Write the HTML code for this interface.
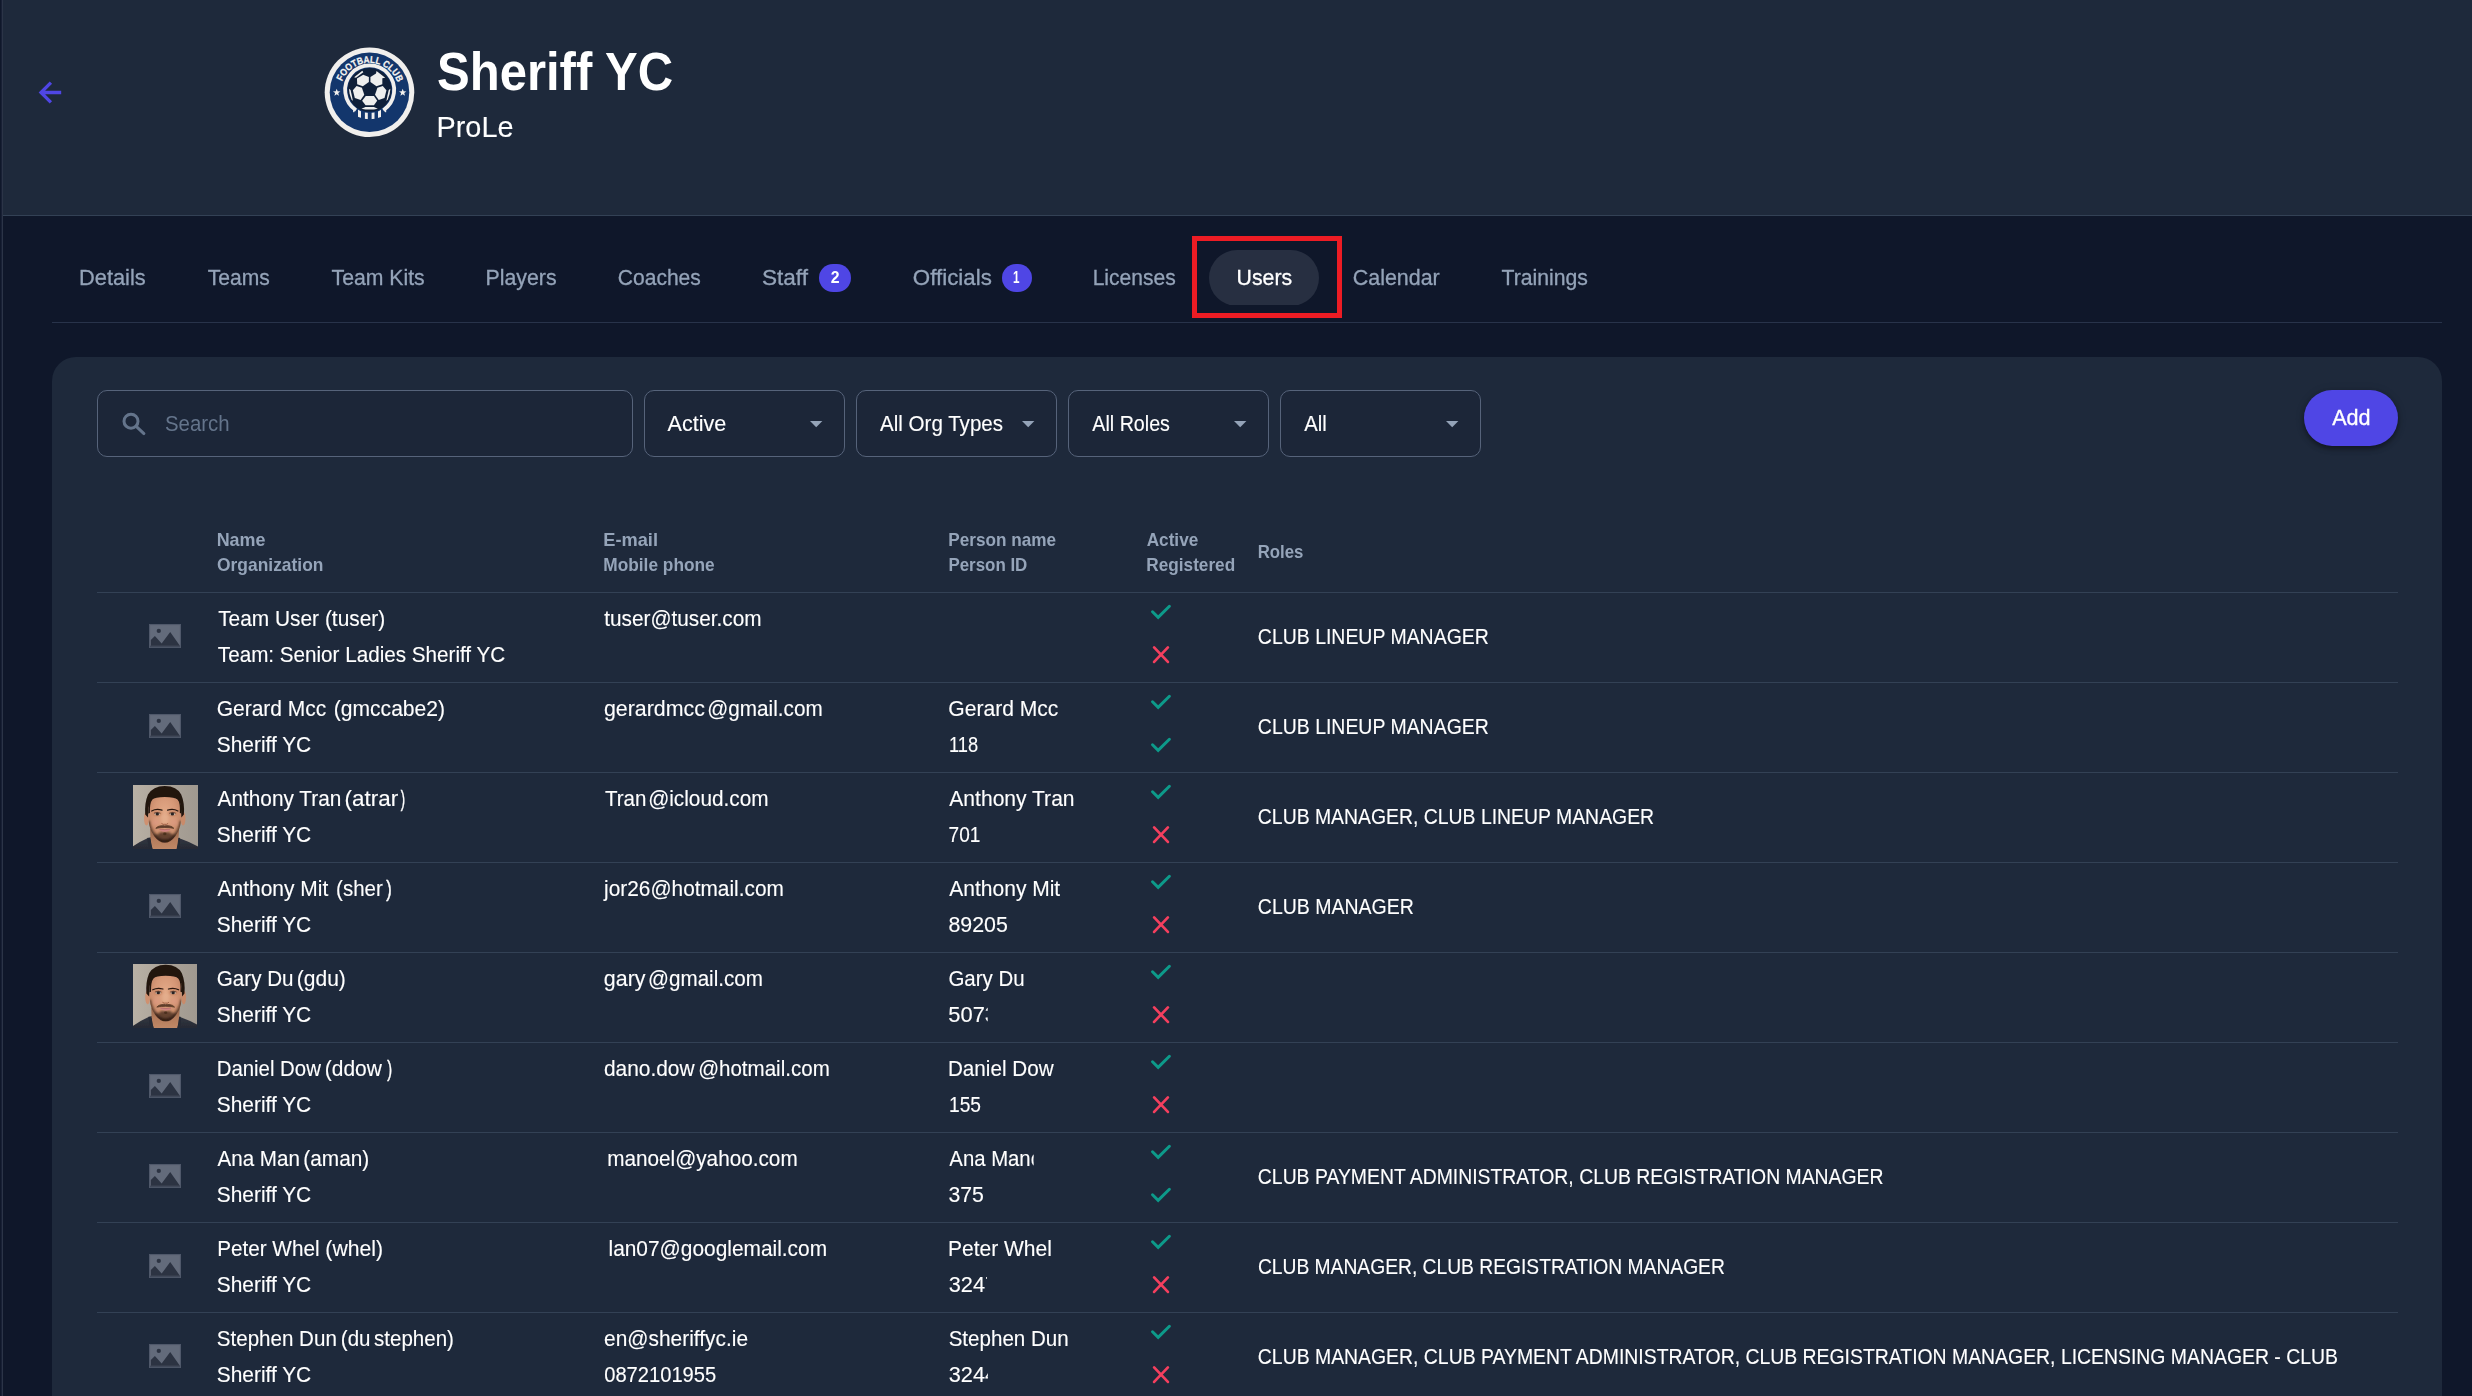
<!DOCTYPE html>
<html lang="en"><head><meta charset="utf-8"><title>Sheriff YC - Users</title>
<style>
html,body{margin:0;padding:0;width:2472px;height:1396px;overflow:hidden}
body{width:2472px;height:1396px;overflow:hidden;background:#0f172a;position:relative;font-family:"Liberation Sans", sans-serif}
.abs{position:absolute}
.t{position:absolute;white-space:pre;line-height:1;margin:0;padding:0;transform-origin:0 0}
.hl{position:absolute;height:1px;background:#334155}
.box{position:absolute;box-sizing:border-box;border:1.5px solid #56637a;border-radius:10px;background:#1c2638;top:390px;height:67px}
.badge{position:absolute;background:#4f46e5;border-radius:14px;height:28px;top:264px}
</style></head><body>
<div class="abs" style="left:1px;top:0;width:1px;height:1396px;background:#182035"></div>
<div class="abs" style="left:2px;top:0;width:1px;height:1396px;background:#2b3447"></div>
<div class="abs" style="left:3px;top:0;width:2469px;height:215px;background:#1e293b"></div>
<div class="hl" style="left:3px;top:215px;width:2469px"></div>
<svg class="abs" style="left:36px;top:78px" width="28" height="28" viewBox="0 0 28 28"><path d="M25.2 14.5 H5 M14.9 4.6 L5 14.5 L14.9 24.4" fill="none" stroke="#4f46e5" stroke-width="3.3" stroke-linecap="butt" stroke-linejoin="miter"/></svg>
<svg class="abs" style="left:324px;top:47px" width="92" height="92" viewBox="0 0 92 92">
<defs>
<clipPath id="strc"><path clip-rule="evenodd" d="M16.35 42.93 a29.3 29.3 0 1 0 58.6 0 a29.3 29.3 0 1 0 -58.6 0 Z M22.65 42.93 a23 23 0 1 0 46 0 a23 23 0 1 0 -46 0 Z"/></clipPath>
<path id="tarc" d="M18.05 34.49 A29.5 29.5 0 0 1 73.22 35.21"/>
</defs>
<circle cx="45.5" cy="45.3" r="44.8" fill="#f1efed"/>
<circle cx="45.5" cy="45.3" r="39.8" fill="#13366c"/>
<path d="M31.95 63.24 A24.5 24.5 0 1 1 59.35 63.24" fill="none" stroke="#f1efed" stroke-width="3.8"/>
<g clip-path="url(#strc)" fill="#f1efed"><rect x="34.0" y="55" width="3.0" height="20"/><rect x="40.9" y="55" width="2.9" height="20"/><rect x="47.6" y="55" width="2.9" height="20"/><rect x="54.0" y="55" width="3.0" height="20"/><rect x="29.1" y="55" width="1.2" height="10.2"/><rect x="61.0" y="55" width="1.2" height="10.2"/></g>
<circle cx="45.65" cy="42.93" r="21.9" fill="#0f1f39"/>
<polygon points="39.21,27.68 44.88,30.04 44.88,35.11 38.86,39.28 33.19,37.35 32.97,31.54" fill="#eeeeee"/><polygon points="46.43,30.04 52.01,26.52 52.53,24.11 61.21,30.73 58.33,31.24 58.33,37.35 52.44,39.28 46.43,35.11" fill="#eeeeee"/><polygon points="28.89,43.15 32.54,39.07 37.92,40.78 40.28,47.66 36.63,53.03 30.83,51.10" fill="#eeeeee"/><polygon points="62.41,43.15 58.76,39.07 53.39,40.78 51.02,47.66 54.68,53.03 60.48,51.10" fill="#eeeeee"/><polygon points="38.13,53.68 41.78,48.95 49.95,48.95 53.17,53.68 49.95,58.19 41.57,58.19" fill="#eeeeee"/><polygon points="30.10,30.13 38.35,23.81 39.29,25.14 31.99,30.73" fill="#eeeeee"/><polygon points="24.94,41.86 26.57,42.93 27.82,48.52 28.89,53.89 27.52,52.39 25.67,47.02" fill="#eeeeee"/><polygon points="66.37,41.86 64.73,42.93 63.49,48.52 62.41,53.89 63.79,52.39 65.63,47.02" fill="#eeeeee"/><polygon points="37.49,61.63 41.35,60.12 49.95,60.12 53.82,61.63 49.95,62.53 41.35,62.53" fill="#eeeeee"/>
<polygon points="12.70,41.70 13.64,44.31 16.41,44.39 14.22,46.09 14.99,48.76 12.70,47.20 10.41,48.76 11.18,46.09 8.99,44.39 11.76,44.31" fill="#f2f0ee"/><polygon points="78.70,41.70 79.64,44.31 82.41,44.39 80.22,46.09 80.99,48.76 78.70,47.20 76.41,48.76 77.18,46.09 74.99,44.39 77.76,44.31" fill="#f2f0ee"/>
<text font-family="Liberation Sans, sans-serif" font-weight="700" font-size="9.7" fill="#f6f4f2" stroke="#f6f4f2" stroke-width="0.25"><textPath href="#tarc" textLength="71.3" lengthAdjust="spacingAndGlyphs">FOOTBALL CLUB</textPath></text>
</svg>
<div class="hl" style="left:52px;top:322px;width:2390px;background:#28334a"></div>
<div class="badge" style="left:819px;width:32px"></div>
<div class="badge" style="left:1002px;width:30px"></div>
<div class="abs" style="left:1209px;top:250px;width:110px;height:55px;overflow:hidden"><div style="width:110px;height:56px;border-radius:28px;background:#272f41"></div></div>
<div class="abs" style="left:1192px;top:236px;width:150px;height:82px;box-sizing:border-box;border:5px solid #ed1c24"></div>
<div class="abs" style="left:52px;top:357px;width:2390px;height:1039px;border-radius:24px 24px 0 0;background:#1e293b"></div>
<div class="box" style="left:97px;width:536px"></div>
<svg class="abs" style="left:121px;top:411px" width="26" height="26" viewBox="0 0 26 26"><circle cx="10" cy="10.2" r="7" fill="none" stroke="#64748b" stroke-width="3"/><path d="M15.2 15.4 L22.9 22.6" stroke="#64748b" stroke-width="3" stroke-linecap="round"/></svg>
<div class="box" style="left:644px;width:201px"></div>
<div class="box" style="left:856px;width:201px"></div>
<div class="box" style="left:1068px;width:201px"></div>
<div class="box" style="left:1280px;width:201px"></div>
<svg class="abs" style="left:809.8px;top:421px" width="13" height="7" viewBox="0 0 13 7"><path d="M0 0 H12.4 L6.2 6.2 Z" fill="#94a3b8"/></svg><svg class="abs" style="left:1021.8px;top:421px" width="13" height="7" viewBox="0 0 13 7"><path d="M0 0 H12.4 L6.2 6.2 Z" fill="#94a3b8"/></svg><svg class="abs" style="left:1233.8px;top:421px" width="13" height="7" viewBox="0 0 13 7"><path d="M0 0 H12.4 L6.2 6.2 Z" fill="#94a3b8"/></svg><svg class="abs" style="left:1445.8px;top:421px" width="13" height="7" viewBox="0 0 13 7"><path d="M0 0 H12.4 L6.2 6.2 Z" fill="#94a3b8"/></svg>
<div class="abs" style="left:2304px;top:390px;width:94px;height:56px;border-radius:28px;background:#4f46e5;box-shadow:0 3px 5px rgba(0,0,0,.35),0 1px 10px rgba(0,0,0,.15)"></div>

<div class="hl" style="left:97px;top:592px;width:2301px"></div>
<div class="hl" style="left:97px;top:682px;width:2301px"></div>
<div class="hl" style="left:97px;top:772px;width:2301px"></div>
<div class="hl" style="left:97px;top:862px;width:2301px"></div>
<div class="hl" style="left:97px;top:952px;width:2301px"></div>
<div class="hl" style="left:97px;top:1042px;width:2301px"></div>
<div class="hl" style="left:97px;top:1132px;width:2301px"></div>
<div class="hl" style="left:97px;top:1222px;width:2301px"></div>
<div class="hl" style="left:97px;top:1312px;width:2301px"></div>
<svg class="abs" style="left:149.3px;top:624px" width="32" height="24" viewBox="0 0 32 24"><rect width="32" height="24" fill="#4f586a"/><rect x="1.1" y="1.1" width="29.8" height="20.8" fill="#636b7b"/><rect x="1.1" y="21.6" width="29.8" height="1.6" fill="#3f4758"/><circle cx="9.8" cy="6.95" r="2.15" fill="#2c3342"/><path d="M1.8 21.8 V16 L5.9 11.9 L12.65 19.6 L21.2 8 L30.7 21.4 V21.8 Z" fill="#2c3342"/></svg>
<svg class="abs" style="left:1148px;top:600px" width="26" height="22" viewBox="0 0 26 22"><path d="M4.5 11.8 L10.15 17.3 L21.4 6.3" fill="none" stroke="#0d9a8a" stroke-width="3" stroke-linecap="round" stroke-linejoin="miter"/></svg>
<svg class="abs" style="left:1150px;top:643px" width="22" height="23" viewBox="0 0 22 23"><path d="M4.1 4.4 L17.9 18.9 M17.9 4.4 L4.1 18.9" fill="none" stroke="#f43f5e" stroke-width="2.7" stroke-linecap="round"/></svg>
<svg class="abs" style="left:149.3px;top:714px" width="32" height="24" viewBox="0 0 32 24"><rect width="32" height="24" fill="#4f586a"/><rect x="1.1" y="1.1" width="29.8" height="20.8" fill="#636b7b"/><rect x="1.1" y="21.6" width="29.8" height="1.6" fill="#3f4758"/><circle cx="9.8" cy="6.95" r="2.15" fill="#2c3342"/><path d="M1.8 21.8 V16 L5.9 11.9 L12.65 19.6 L21.2 8 L30.7 21.4 V21.8 Z" fill="#2c3342"/></svg>
<svg class="abs" style="left:1148px;top:690px" width="26" height="22" viewBox="0 0 26 22"><path d="M4.5 11.8 L10.15 17.3 L21.4 6.3" fill="none" stroke="#0d9a8a" stroke-width="3" stroke-linecap="round" stroke-linejoin="miter"/></svg>
<svg class="abs" style="left:1148px;top:733px" width="26" height="22" viewBox="0 0 26 22"><path d="M4.5 11.8 L10.15 17.3 L21.4 6.3" fill="none" stroke="#0d9a8a" stroke-width="3" stroke-linecap="round" stroke-linejoin="miter"/></svg>
<svg class="abs" style="left:133px;top:785px" width="65" height="64" viewBox="0 0 65 64" preserveAspectRatio="none">
<defs>
<linearGradient id="bga2" x1="0" x2="1" y1="0" y2="0"><stop offset="0" stop-color="#b9b1a5"/><stop offset="0.45" stop-color="#aca499"/><stop offset="1" stop-color="#a09990"/></linearGradient>
<radialGradient id="ska2" cx="0.5" cy="0.38" r="0.62"><stop offset="0" stop-color="#e3aa88"/><stop offset="0.55" stop-color="#d69877"/><stop offset="1" stop-color="#bd8061"/></radialGradient>
<linearGradient id="nka2" x1="0" x2="0" y1="0" y2="1"><stop offset="0" stop-color="#8f5f45"/><stop offset="0.45" stop-color="#b47c5c"/><stop offset="1" stop-color="#c28a68"/></linearGradient>
<linearGradient id="sha2" x1="0" x2="0" y1="0" y2="1"><stop offset="0" stop-color="#343843"/><stop offset="1" stop-color="#23262f"/></linearGradient>
<filter id="f1a2" x="-20%" y="-20%" width="140%" height="140%"><feGaussianBlur stdDeviation="0.55"/></filter>
<filter id="f2a2" x="-30%" y="-30%" width="160%" height="160%"><feGaussianBlur stdDeviation="1.1"/></filter>
<filter id="f3a2" x="-30%" y="-30%" width="160%" height="160%"><feGaussianBlur stdDeviation="0.35"/></filter>
<clipPath id="cpa2"><rect x="0" y="0" width="65" height="64"/></clipPath>
<clipPath id="fca2"><path d="M15.7 22 Q16 10.6 31.8 10.2 Q47.6 10.6 47.9 22 L47.9 28 Q48.2 36 47.3 40.2 Q46 47 42.4 51.2 Q37.5 57.8 31.8 57.8 Q26.1 57.8 21.1 51.2 Q17.6 47 16.3 40.2 Q15.4 36 15.7 28 Z"/></clipPath>
</defs>
<g clip-path="url(#cpa2)">
<rect x="0" y="0" width="65" height="64" fill="url(#bga2)"/>
<g transform="translate(0 0)">
<g filter="url(#f1a2)">
<path d="M-2 62.4 Q6 57 14.4 53.3 Q20 51 24 50.6 L40 50.6 Q44 51 46.4 53.3 Q57 57 67 62.4 L67 68 L-2 68 Z" fill="url(#sha2)"/>
<path d="M17.2 44 L17.4 52.4 Q17.6 59 20 66 L43.4 66 Q45.4 59 45.6 52.4 L46 44 Z" fill="url(#nka2)"/>
<path d="M14.2 53 Q17 52.4 17.6 54.6 Q18.4 60 19.8 65 L16.4 65 Q15 59 14.2 53 Z" fill="#262a34"/>
<path d="M47 53 Q45 52.4 45.2 54.6 Q44.6 60 43.4 65 L46.6 65 Q47.2 59 47 53 Z" fill="#262a34"/>
<ellipse cx="13.5" cy="33.6" rx="2.5" ry="7" fill="#cf9170"/>
<ellipse cx="50.1" cy="33.6" rx="2.4" ry="7" fill="#c98b6b"/>
<path d="M12.2 29.6 Q11.4 18 15 9.5 Q20 1 31.8 0.9 Q44 1 48.2 9.5 Q51.8 18 50.9 29.6 L48.4 32.6 L47.9 22 L15.7 22 L15 32.6 Z" fill="#21150f"/>
<path d="M15.7 22 Q16 10.6 31.8 10.2 Q47.6 10.6 47.9 22 L47.9 28 Q48.2 36 47.3 40.2 Q46 47 42.4 51.2 Q37.5 57.8 31.8 57.8 Q26.1 57.8 21.1 51.2 Q17.6 47 16.3 40.2 Q15.4 36 15.7 28 Z" fill="url(#ska2)"/>
<path d="M15.2 28.4 L15.6 20 Q16.4 12.4 21.1 10.6 Q26 9.6 31.8 9.8 Q37.6 9.6 43.7 10.6 Q47.4 12.4 48 20 L48.4 28.4 L46.8 28 Q47.4 18 44.6 14.6 Q42 12.2 31.8 12 Q21.6 12.2 19.4 14.6 Q16.6 18 16.9 28 Z" fill="#21150f"/>
</g>
<g clip-path="url(#fca2)">
<g filter="url(#f2a2)">
<path d="M14 36 Q15.4 47.6 20.6 52.6 Q26 59.6 31.8 59.6 Q37.6 59.6 43 52.6 Q48.2 47.6 49.6 36 L46.4 36 Q45.6 44.6 41.4 48.4 Q38.4 50.6 36.6 47.2 L27 47.2 Q25.2 50.6 22.2 48.4 Q18 44.6 17.2 36 Z" fill="#4a2f20" opacity="0.8"/>
<path d="M21 50 Q26 57.6 31.8 57.8 Q37.6 57.6 42.6 50 Q37.6 55.4 31.8 55.4 Q26 55.4 21 50 Z" fill="#2e1b12" stroke="#2e1b12" stroke-width="1.6" opacity="0.9"/>
<ellipse cx="24" cy="28.6" rx="4.6" ry="2.6" fill="#b9734f" opacity="0.55"/>
<ellipse cx="39.6" cy="28.6" rx="4.6" ry="2.6" fill="#b9734f" opacity="0.55"/>
<path d="M29 30 Q28.4 36 28.6 38.8 L35 38.8 Q35.2 36 34.6 30 Z" fill="#e8b493" opacity="0.55"/>
<ellipse cx="22.6" cy="37.6" rx="3.6" ry="3" fill="#e09a86" opacity="0.4"/>
<ellipse cx="41" cy="37.6" rx="3.6" ry="3" fill="#e09a86" opacity="0.4"/>
</g>
</g>
<g filter="url(#f1a2)">
<path d="M22.8 43.3 Q24.6 41.2 27.2 40.9 Q30 40.4 31.8 40.9 Q33.6 40.4 36.4 40.9 Q39 41.2 40.8 43.3 Q36.4 42.4 31.8 42.5 Q27.2 42.4 22.8 43.3 Z" fill="#553624" stroke="#553624" stroke-width="0.9" opacity="0.92" stroke-linejoin="round"/>
<ellipse cx="31.8" cy="48.9" rx="1.7" ry="1.3" fill="#4c301f"/>
</g>
<g filter="url(#f3a2)">
<path d="M26 44 Q31.8 44.8 37.6 44 Q36 46.6 31.8 46.7 Q27.6 46.6 26 44 Z" fill="#cf8280"/>
<path d="M26.4 44.1 Q31.8 45.2 37.2 44.1" fill="none" stroke="#9c5654" stroke-width="0.5"/>
<path d="M18.7 26 Q23.4 23.4 29 25.2" fill="none" stroke="#2a1911" stroke-width="1.25" stroke-linecap="round"/>
<path d="M34.6 25.2 Q40.2 23.4 44.9 26" fill="none" stroke="#2a1911" stroke-width="1.25" stroke-linecap="round"/>
<ellipse cx="24.2" cy="28.9" rx="2.9" ry="1.25" fill="#cdb9aa"/>
<ellipse cx="39.5" cy="28.9" rx="2.9" ry="1.25" fill="#cdb9aa"/>
<ellipse cx="24.3" cy="28.9" rx="1.7" ry="1.5" fill="#2a2422"/>
<ellipse cx="39.4" cy="28.9" rx="1.7" ry="1.5" fill="#2a2422"/>
<path d="M21 28.2 Q24.2 26.6 27.4 28.3" fill="none" stroke="#3a231a" stroke-width="0.7"/>
<path d="M36.3 28.3 Q39.5 26.6 42.7 28.2" fill="none" stroke="#3a231a" stroke-width="0.7"/>
<path d="M28.8 38.7 Q30.2 39.9 31.8 39.3 Q33.4 39.9 34.8 38.7" fill="none" stroke="#96593f" stroke-width="0.9" stroke-linecap="round"/>
</g>
</g>
</g>
</svg>

<svg class="abs" style="left:1148px;top:780px" width="26" height="22" viewBox="0 0 26 22"><path d="M4.5 11.8 L10.15 17.3 L21.4 6.3" fill="none" stroke="#0d9a8a" stroke-width="3" stroke-linecap="round" stroke-linejoin="miter"/></svg>
<svg class="abs" style="left:1150px;top:823px" width="22" height="23" viewBox="0 0 22 23"><path d="M4.1 4.4 L17.9 18.9 M17.9 4.4 L4.1 18.9" fill="none" stroke="#f43f5e" stroke-width="2.7" stroke-linecap="round"/></svg>
<svg class="abs" style="left:149.3px;top:894px" width="32" height="24" viewBox="0 0 32 24"><rect width="32" height="24" fill="#4f586a"/><rect x="1.1" y="1.1" width="29.8" height="20.8" fill="#636b7b"/><rect x="1.1" y="21.6" width="29.8" height="1.6" fill="#3f4758"/><circle cx="9.8" cy="6.95" r="2.15" fill="#2c3342"/><path d="M1.8 21.8 V16 L5.9 11.9 L12.65 19.6 L21.2 8 L30.7 21.4 V21.8 Z" fill="#2c3342"/></svg>
<svg class="abs" style="left:1148px;top:870px" width="26" height="22" viewBox="0 0 26 22"><path d="M4.5 11.8 L10.15 17.3 L21.4 6.3" fill="none" stroke="#0d9a8a" stroke-width="3" stroke-linecap="round" stroke-linejoin="miter"/></svg>
<svg class="abs" style="left:1150px;top:913px" width="22" height="23" viewBox="0 0 22 23"><path d="M4.1 4.4 L17.9 18.9 M17.9 4.4 L4.1 18.9" fill="none" stroke="#f43f5e" stroke-width="2.7" stroke-linecap="round"/></svg>
<svg class="abs" style="left:133px;top:964px" width="64" height="64" viewBox="0 0 65 64" preserveAspectRatio="none">
<defs>
<linearGradient id="bga4" x1="0" x2="1" y1="0" y2="0"><stop offset="0" stop-color="#b9b1a5"/><stop offset="0.45" stop-color="#aca499"/><stop offset="1" stop-color="#a09990"/></linearGradient>
<radialGradient id="ska4" cx="0.5" cy="0.38" r="0.62"><stop offset="0" stop-color="#e3aa88"/><stop offset="0.55" stop-color="#d69877"/><stop offset="1" stop-color="#bd8061"/></radialGradient>
<linearGradient id="nka4" x1="0" x2="0" y1="0" y2="1"><stop offset="0" stop-color="#8f5f45"/><stop offset="0.45" stop-color="#b47c5c"/><stop offset="1" stop-color="#c28a68"/></linearGradient>
<linearGradient id="sha4" x1="0" x2="0" y1="0" y2="1"><stop offset="0" stop-color="#343843"/><stop offset="1" stop-color="#23262f"/></linearGradient>
<filter id="f1a4" x="-20%" y="-20%" width="140%" height="140%"><feGaussianBlur stdDeviation="0.55"/></filter>
<filter id="f2a4" x="-30%" y="-30%" width="160%" height="160%"><feGaussianBlur stdDeviation="1.1"/></filter>
<filter id="f3a4" x="-30%" y="-30%" width="160%" height="160%"><feGaussianBlur stdDeviation="0.35"/></filter>
<clipPath id="cpa4"><rect x="0" y="0" width="65" height="64"/></clipPath>
<clipPath id="fca4"><path d="M15.7 22 Q16 10.6 31.8 10.2 Q47.6 10.6 47.9 22 L47.9 28 Q48.2 36 47.3 40.2 Q46 47 42.4 51.2 Q37.5 57.8 31.8 57.8 Q26.1 57.8 21.1 51.2 Q17.6 47 16.3 40.2 Q15.4 36 15.7 28 Z"/></clipPath>
</defs>
<g clip-path="url(#cpa4)">
<rect x="0" y="0" width="65" height="64" fill="url(#bga4)"/>
<g transform="translate(1.4 -0.2)">
<g filter="url(#f1a4)">
<path d="M-2 62.4 Q6 57 14.4 53.3 Q20 51 24 50.6 L40 50.6 Q44 51 46.4 53.3 Q57 57 67 62.4 L67 68 L-2 68 Z" fill="url(#sha4)"/>
<path d="M17.2 44 L17.4 52.4 Q17.6 59 20 66 L43.4 66 Q45.4 59 45.6 52.4 L46 44 Z" fill="url(#nka4)"/>
<path d="M14.2 53 Q17 52.4 17.6 54.6 Q18.4 60 19.8 65 L16.4 65 Q15 59 14.2 53 Z" fill="#262a34"/>
<path d="M47 53 Q45 52.4 45.2 54.6 Q44.6 60 43.4 65 L46.6 65 Q47.2 59 47 53 Z" fill="#262a34"/>
<ellipse cx="13.5" cy="33.6" rx="2.5" ry="7" fill="#cf9170"/>
<ellipse cx="50.1" cy="33.6" rx="2.4" ry="7" fill="#c98b6b"/>
<path d="M12.2 29.6 Q11.4 18 15 9.5 Q20 1 31.8 0.9 Q44 1 48.2 9.5 Q51.8 18 50.9 29.6 L48.4 32.6 L47.9 22 L15.7 22 L15 32.6 Z" fill="#21150f"/>
<path d="M15.7 22 Q16 10.6 31.8 10.2 Q47.6 10.6 47.9 22 L47.9 28 Q48.2 36 47.3 40.2 Q46 47 42.4 51.2 Q37.5 57.8 31.8 57.8 Q26.1 57.8 21.1 51.2 Q17.6 47 16.3 40.2 Q15.4 36 15.7 28 Z" fill="url(#ska4)"/>
<path d="M15.2 28.4 L15.6 20 Q16.4 12.4 21.1 10.6 Q26 9.6 31.8 9.8 Q37.6 9.6 43.7 10.6 Q47.4 12.4 48 20 L48.4 28.4 L46.8 28 Q47.4 18 44.6 14.6 Q42 12.2 31.8 12 Q21.6 12.2 19.4 14.6 Q16.6 18 16.9 28 Z" fill="#21150f"/>
</g>
<g clip-path="url(#fca4)">
<g filter="url(#f2a4)">
<path d="M14 36 Q15.4 47.6 20.6 52.6 Q26 59.6 31.8 59.6 Q37.6 59.6 43 52.6 Q48.2 47.6 49.6 36 L46.4 36 Q45.6 44.6 41.4 48.4 Q38.4 50.6 36.6 47.2 L27 47.2 Q25.2 50.6 22.2 48.4 Q18 44.6 17.2 36 Z" fill="#4a2f20" opacity="0.8"/>
<path d="M21 50 Q26 57.6 31.8 57.8 Q37.6 57.6 42.6 50 Q37.6 55.4 31.8 55.4 Q26 55.4 21 50 Z" fill="#2e1b12" stroke="#2e1b12" stroke-width="1.6" opacity="0.9"/>
<ellipse cx="24" cy="28.6" rx="4.6" ry="2.6" fill="#b9734f" opacity="0.55"/>
<ellipse cx="39.6" cy="28.6" rx="4.6" ry="2.6" fill="#b9734f" opacity="0.55"/>
<path d="M29 30 Q28.4 36 28.6 38.8 L35 38.8 Q35.2 36 34.6 30 Z" fill="#e8b493" opacity="0.55"/>
<ellipse cx="22.6" cy="37.6" rx="3.6" ry="3" fill="#e09a86" opacity="0.4"/>
<ellipse cx="41" cy="37.6" rx="3.6" ry="3" fill="#e09a86" opacity="0.4"/>
</g>
</g>
<g filter="url(#f1a4)">
<path d="M22.8 43.3 Q24.6 41.2 27.2 40.9 Q30 40.4 31.8 40.9 Q33.6 40.4 36.4 40.9 Q39 41.2 40.8 43.3 Q36.4 42.4 31.8 42.5 Q27.2 42.4 22.8 43.3 Z" fill="#553624" stroke="#553624" stroke-width="0.9" opacity="0.92" stroke-linejoin="round"/>
<ellipse cx="31.8" cy="48.9" rx="1.7" ry="1.3" fill="#4c301f"/>
</g>
<g filter="url(#f3a4)">
<path d="M26 44 Q31.8 44.8 37.6 44 Q36 46.6 31.8 46.7 Q27.6 46.6 26 44 Z" fill="#cf8280"/>
<path d="M26.4 44.1 Q31.8 45.2 37.2 44.1" fill="none" stroke="#9c5654" stroke-width="0.5"/>
<path d="M18.7 26 Q23.4 23.4 29 25.2" fill="none" stroke="#2a1911" stroke-width="1.25" stroke-linecap="round"/>
<path d="M34.6 25.2 Q40.2 23.4 44.9 26" fill="none" stroke="#2a1911" stroke-width="1.25" stroke-linecap="round"/>
<ellipse cx="24.2" cy="28.9" rx="2.9" ry="1.25" fill="#cdb9aa"/>
<ellipse cx="39.5" cy="28.9" rx="2.9" ry="1.25" fill="#cdb9aa"/>
<ellipse cx="24.3" cy="28.9" rx="1.7" ry="1.5" fill="#2a2422"/>
<ellipse cx="39.4" cy="28.9" rx="1.7" ry="1.5" fill="#2a2422"/>
<path d="M21 28.2 Q24.2 26.6 27.4 28.3" fill="none" stroke="#3a231a" stroke-width="0.7"/>
<path d="M36.3 28.3 Q39.5 26.6 42.7 28.2" fill="none" stroke="#3a231a" stroke-width="0.7"/>
<path d="M28.8 38.7 Q30.2 39.9 31.8 39.3 Q33.4 39.9 34.8 38.7" fill="none" stroke="#96593f" stroke-width="0.9" stroke-linecap="round"/>
</g>
</g>
</g>
</svg>

<svg class="abs" style="left:1148px;top:960px" width="26" height="22" viewBox="0 0 26 22"><path d="M4.5 11.8 L10.15 17.3 L21.4 6.3" fill="none" stroke="#0d9a8a" stroke-width="3" stroke-linecap="round" stroke-linejoin="miter"/></svg>
<svg class="abs" style="left:1150px;top:1003px" width="22" height="23" viewBox="0 0 22 23"><path d="M4.1 4.4 L17.9 18.9 M17.9 4.4 L4.1 18.9" fill="none" stroke="#f43f5e" stroke-width="2.7" stroke-linecap="round"/></svg>
<svg class="abs" style="left:149.3px;top:1074px" width="32" height="24" viewBox="0 0 32 24"><rect width="32" height="24" fill="#4f586a"/><rect x="1.1" y="1.1" width="29.8" height="20.8" fill="#636b7b"/><rect x="1.1" y="21.6" width="29.8" height="1.6" fill="#3f4758"/><circle cx="9.8" cy="6.95" r="2.15" fill="#2c3342"/><path d="M1.8 21.8 V16 L5.9 11.9 L12.65 19.6 L21.2 8 L30.7 21.4 V21.8 Z" fill="#2c3342"/></svg>
<svg class="abs" style="left:1148px;top:1050px" width="26" height="22" viewBox="0 0 26 22"><path d="M4.5 11.8 L10.15 17.3 L21.4 6.3" fill="none" stroke="#0d9a8a" stroke-width="3" stroke-linecap="round" stroke-linejoin="miter"/></svg>
<svg class="abs" style="left:1150px;top:1093px" width="22" height="23" viewBox="0 0 22 23"><path d="M4.1 4.4 L17.9 18.9 M17.9 4.4 L4.1 18.9" fill="none" stroke="#f43f5e" stroke-width="2.7" stroke-linecap="round"/></svg>
<svg class="abs" style="left:149.3px;top:1164px" width="32" height="24" viewBox="0 0 32 24"><rect width="32" height="24" fill="#4f586a"/><rect x="1.1" y="1.1" width="29.8" height="20.8" fill="#636b7b"/><rect x="1.1" y="21.6" width="29.8" height="1.6" fill="#3f4758"/><circle cx="9.8" cy="6.95" r="2.15" fill="#2c3342"/><path d="M1.8 21.8 V16 L5.9 11.9 L12.65 19.6 L21.2 8 L30.7 21.4 V21.8 Z" fill="#2c3342"/></svg>
<svg class="abs" style="left:1148px;top:1140px" width="26" height="22" viewBox="0 0 26 22"><path d="M4.5 11.8 L10.15 17.3 L21.4 6.3" fill="none" stroke="#0d9a8a" stroke-width="3" stroke-linecap="round" stroke-linejoin="miter"/></svg>
<svg class="abs" style="left:1148px;top:1183px" width="26" height="22" viewBox="0 0 26 22"><path d="M4.5 11.8 L10.15 17.3 L21.4 6.3" fill="none" stroke="#0d9a8a" stroke-width="3" stroke-linecap="round" stroke-linejoin="miter"/></svg>
<svg class="abs" style="left:149.3px;top:1254px" width="32" height="24" viewBox="0 0 32 24"><rect width="32" height="24" fill="#4f586a"/><rect x="1.1" y="1.1" width="29.8" height="20.8" fill="#636b7b"/><rect x="1.1" y="21.6" width="29.8" height="1.6" fill="#3f4758"/><circle cx="9.8" cy="6.95" r="2.15" fill="#2c3342"/><path d="M1.8 21.8 V16 L5.9 11.9 L12.65 19.6 L21.2 8 L30.7 21.4 V21.8 Z" fill="#2c3342"/></svg>
<svg class="abs" style="left:1148px;top:1230px" width="26" height="22" viewBox="0 0 26 22"><path d="M4.5 11.8 L10.15 17.3 L21.4 6.3" fill="none" stroke="#0d9a8a" stroke-width="3" stroke-linecap="round" stroke-linejoin="miter"/></svg>
<svg class="abs" style="left:1150px;top:1273px" width="22" height="23" viewBox="0 0 22 23"><path d="M4.1 4.4 L17.9 18.9 M17.9 4.4 L4.1 18.9" fill="none" stroke="#f43f5e" stroke-width="2.7" stroke-linecap="round"/></svg>
<svg class="abs" style="left:149.3px;top:1344px" width="32" height="24" viewBox="0 0 32 24"><rect width="32" height="24" fill="#4f586a"/><rect x="1.1" y="1.1" width="29.8" height="20.8" fill="#636b7b"/><rect x="1.1" y="21.6" width="29.8" height="1.6" fill="#3f4758"/><circle cx="9.8" cy="6.95" r="2.15" fill="#2c3342"/><path d="M1.8 21.8 V16 L5.9 11.9 L12.65 19.6 L21.2 8 L30.7 21.4 V21.8 Z" fill="#2c3342"/></svg>
<svg class="abs" style="left:1148px;top:1320px" width="26" height="22" viewBox="0 0 26 22"><path d="M4.5 11.8 L10.15 17.3 L21.4 6.3" fill="none" stroke="#0d9a8a" stroke-width="3" stroke-linecap="round" stroke-linejoin="miter"/></svg>
<svg class="abs" style="left:1150px;top:1363px" width="22" height="23" viewBox="0 0 22 23"><path d="M4.1 4.4 L17.9 18.9 M17.9 4.4 L4.1 18.9" fill="none" stroke="#f43f5e" stroke-width="2.7" stroke-linecap="round"/></svg>
<div class="abs" style="left:0;top:0;width:2472px;height:1396px;will-change:opacity">
<div class="t" style="left:0;top:0;font-size:54.4px;color:#ffffff;transform:translate(437.02px,45.00px) scaleX(0.9013);font-weight:700">Sheriff YC</div>
<div class="t" style="left:0;top:0;font-size:30px;color:#ffffff;transform:translate(436.50px,111.89px) scaleX(0.9623);-webkit-text-stroke:0.1px #ffffff">ProLe</div>
<div class="t" style="left:0;top:0;font-size:21.4px;color:#94a3b8;transform:translate(79.03px,267.90px) scaleX(1.0201);-webkit-text-stroke:0.3px #94a3b8">Details</div>
<div class="t" style="left:0;top:0;font-size:21.4px;color:#94a3b8;transform:translate(207.69px,267.90px) scaleX(0.9850);-webkit-text-stroke:0.3px #94a3b8">Teams</div>
<div class="t" style="left:0;top:0;font-size:21.4px;color:#94a3b8;transform:translate(331.61px,267.90px) scaleX(0.9908);-webkit-text-stroke:0.3px #94a3b8">Team Kits</div>
<div class="t" style="left:0;top:0;font-size:21.4px;color:#94a3b8;transform:translate(485.51px,267.90px) scaleX(0.9957);-webkit-text-stroke:0.3px #94a3b8">Players</div>
<div class="t" style="left:0;top:0;font-size:21.4px;color:#94a3b8;transform:translate(617.79px,267.90px) scaleX(0.9836);-webkit-text-stroke:0.3px #94a3b8">Coaches</div>
<div class="t" style="left:0;top:0;font-size:21.4px;color:#94a3b8;transform:translate(761.89px,267.90px) scaleX(1.0563);-webkit-text-stroke:0.3px #94a3b8">Staff</div>
<div class="t" style="left:0;top:0;font-size:21.4px;color:#94a3b8;transform:translate(912.87px,267.90px) scaleX(1.0434);-webkit-text-stroke:0.3px #94a3b8">Officials</div>
<div class="t" style="left:0;top:0;font-size:21.4px;color:#94a3b8;transform:translate(1092.65px,267.90px) scaleX(0.9845);-webkit-text-stroke:0.3px #94a3b8">Licenses</div>
<div class="t" style="left:0;top:0;font-size:21.4px;color:#94a3b8;transform:translate(1352.72px,267.90px) scaleX(1.0024);-webkit-text-stroke:0.3px #94a3b8">Calendar</div>
<div class="t" style="left:0;top:0;font-size:21.4px;color:#94a3b8;transform:translate(1501.54px,267.90px) scaleX(0.9911);-webkit-text-stroke:0.3px #94a3b8">Trainings</div>
<div class="t" style="left:0;top:0;font-size:21.4px;color:#ffffff;transform:translate(1236.59px,268.10px) scaleX(0.9941);-webkit-text-stroke:0.3px #ffffff">Users</div>
<div class="t" style="left:0;top:0;font-size:15.8px;color:#ffffff;transform:translate(830.82px,269.90px) scaleX(1.0032);font-weight:700">2</div>
<div class="t" style="left:0;top:0;font-size:15.8px;color:#ffffff;transform:translate(1012.99px,269.90px) scaleX(0.7394);font-weight:700">1</div>
<div class="t" style="left:0;top:0;font-size:21.2px;color:#64748b;transform:translate(164.97px,413.00px) scaleX(0.9633)">Search</div>
<div class="t" style="left:0;top:0;font-size:21.6px;color:#ffffff;transform:translate(667.50px,413.00px) scaleX(0.9987);-webkit-text-stroke:0.12px #ffffff">Active</div>
<div class="t" style="left:0;top:0;font-size:21.6px;color:#ffffff;transform:translate(879.97px,413.00px) scaleX(0.9526);-webkit-text-stroke:0.12px #ffffff">All Org Types</div>
<div class="t" style="left:0;top:0;font-size:21.6px;color:#ffffff;transform:translate(1092.31px,413.00px) scaleX(0.9113);-webkit-text-stroke:0.12px #ffffff">All Roles</div>
<div class="t" style="left:0;top:0;font-size:21.6px;color:#ffffff;transform:translate(1304.31px,413.00px) scaleX(0.9385);-webkit-text-stroke:0.12px #ffffff">All</div>
<div class="t" style="left:0;top:0;font-size:21.5px;color:#ffffff;transform:translate(2332.17px,407.90px) scaleX(1.0029);-webkit-text-stroke:0.35px #ffffff">Add</div>
<div class="t" style="left:0;top:0;font-size:18.2px;color:#95a4b9;transform:translate(216.63px,530.90px) scaleX(0.9853);font-weight:700">Name</div>
<div class="t" style="left:0;top:0;font-size:18.2px;color:#95a4b9;transform:translate(217.07px,556.00px) scaleX(0.9565);font-weight:700">Organization</div>
<div class="t" style="left:0;top:0;font-size:18.2px;color:#95a4b9;transform:translate(603.25px,530.90px) scaleX(1.0021);font-weight:700">E-mail</div>
<div class="t" style="left:0;top:0;font-size:18.2px;color:#95a4b9;transform:translate(603.31px,556.00px) scaleX(0.9502);font-weight:700">Mobile phone</div>
<div class="t" style="left:0;top:0;font-size:18.2px;color:#95a4b9;transform:translate(948.34px,530.90px) scaleX(0.9430);font-weight:700">Person name</div>
<div class="t" style="left:0;top:0;font-size:18.2px;color:#95a4b9;transform:translate(948.39px,556.00px) scaleX(0.9296);font-weight:700">Person ID</div>
<div class="t" style="left:0;top:0;font-size:18.2px;color:#95a4b9;transform:translate(1146.64px,530.90px) scaleX(0.9458);font-weight:700">Active</div>
<div class="t" style="left:0;top:0;font-size:18.2px;color:#95a4b9;transform:translate(1146.33px,556.00px) scaleX(0.9450);font-weight:700">Registered</div>
<div class="t" style="left:0;top:0;font-size:18.2px;color:#95a4b9;transform:translate(1257.64px,543.30px) scaleX(0.9218);font-weight:700">Roles</div>
<div class="t" style="left:0;top:0;font-size:21.7px;color:#ffffff;transform:translate(218.15px,608.20px) scaleX(0.9626);-webkit-text-stroke:0.12px #ffffff">Team User (tuser)</div>
<div class="t" style="left:0;top:0;font-size:21.7px;color:#ffffff;transform:translate(217.85px,644.00px) scaleX(0.9519);-webkit-text-stroke:0.12px #ffffff">Team: Senior Ladies Sheriff YC</div>
<div class="t" style="left:0;top:0;font-size:21.7px;color:#ffffff;transform:translate(604.18px,608.20px) scaleX(0.9582);-webkit-text-stroke:0.12px #ffffff">tuser@tuser.com</div>
<div class="t" style="left:0;top:0;font-size:21.7px;color:#ffffff;transform:translate(1257.85px,626.00px) scaleX(0.8968);-webkit-text-stroke:0.12px #ffffff">CLUB LINEUP MANAGER</div>
<div class="t" style="left:0;top:0;font-size:21.7px;color:#ffffff;transform:translate(216.72px,698.20px) scaleX(0.9674);-webkit-text-stroke:0.12px #ffffff">Gerard Mcc</div>
<div class="t" style="left:0;top:0;font-size:21.7px;color:#ffffff;transform:translate(333.76px,698.20px) scaleX(0.9719);-webkit-text-stroke:0.12px #ffffff">(gmccabe2)</div>
<div class="t" style="left:0;top:0;font-size:21.7px;color:#ffffff;transform:translate(216.75px,734.00px) scaleX(0.9634);-webkit-text-stroke:0.12px #ffffff">Sheriff YC</div>
<div class="t" style="left:0;top:0;font-size:21.7px;color:#ffffff;transform:translate(603.89px,698.20px) scaleX(0.9856);-webkit-text-stroke:0.12px #ffffff">gerardmcc</div>
<div class="t" style="left:0;top:0;font-size:21.7px;color:#ffffff;transform:translate(707.37px,698.20px) scaleX(0.9537);-webkit-text-stroke:0.12px #ffffff">@gmail.com</div>
<div class="t" style="left:0;top:0;font-size:21.7px;color:#ffffff;transform:translate(948.30px,698.20px) scaleX(0.9713);-webkit-text-stroke:0.12px #ffffff">Gerard Mcc</div>
<div class="t" style="left:0;top:0;font-size:21.7px;color:#ffffff;transform:translate(949.05px,734.00px) scaleX(0.8432);-webkit-text-stroke:0.12px #ffffff">118</div>
<div class="t" style="left:0;top:0;font-size:21.7px;color:#ffffff;transform:translate(1257.85px,716.00px) scaleX(0.8968);-webkit-text-stroke:0.12px #ffffff">CLUB LINEUP MANAGER</div>
<div class="t" style="left:0;top:0;font-size:21.7px;color:#ffffff;transform:translate(217.53px,788.20px) scaleX(0.9600);-webkit-text-stroke:0.12px #ffffff">Anthony Tran</div>
<div class="t" style="left:0;top:0;font-size:21.7px;color:#ffffff;transform:translate(344.53px,788.20px) scaleX(1.0344);-webkit-text-stroke:0.12px #ffffff">(atrar</div>
<div class="t" style="left:0;top:0;font-size:21.7px;color:#ffffff;transform:translate(400.63px,788.20px) scaleX(0.5966);-webkit-text-stroke:0.45px #ffffff">)</div>
<div class="t" style="left:0;top:0;font-size:21.7px;color:#ffffff;transform:translate(216.75px,824.00px) scaleX(0.9634);-webkit-text-stroke:0.12px #ffffff">Sheriff YC</div>
<div class="t" style="left:0;top:0;font-size:21.7px;color:#ffffff;transform:translate(604.88px,788.20px) scaleX(0.9460);-webkit-text-stroke:0.12px #ffffff">Tran</div>
<div class="t" style="left:0;top:0;font-size:21.7px;color:#ffffff;transform:translate(648.13px,788.20px) scaleX(0.9587);-webkit-text-stroke:0.12px #ffffff">@icloud.com</div>
<div class="t" style="left:0;top:0;font-size:21.7px;color:#ffffff;transform:translate(949.31px,788.20px) scaleX(0.9709);-webkit-text-stroke:0.12px #ffffff">Anthony Tran</div>
<div class="t" style="left:0;top:0;font-size:21.7px;color:#ffffff;transform:translate(948.54px,824.00px) scaleX(0.8781);-webkit-text-stroke:0.12px #ffffff">701</div>
<div class="t" style="left:0;top:0;font-size:21.7px;color:#ffffff;transform:translate(1257.84px,806.00px) scaleX(0.8943);-webkit-text-stroke:0.12px #ffffff">CLUB MANAGER, CLUB LINEUP MANAGER</div>
<div class="t" style="left:0;top:0;font-size:21.7px;color:#ffffff;transform:translate(217.53px,878.20px) scaleX(0.9668);-webkit-text-stroke:0.12px #ffffff">Anthony Mit</div>
<div class="t" style="left:0;top:0;font-size:21.7px;color:#ffffff;transform:translate(336.10px,878.20px) scaleX(0.9444);-webkit-text-stroke:0.12px #ffffff">(sher</div>
<div class="t" style="left:0;top:0;font-size:21.7px;color:#ffffff;transform:translate(386.30px,878.20px) scaleX(0.7569);-webkit-text-stroke:0.45px #ffffff">)</div>
<div class="t" style="left:0;top:0;font-size:21.7px;color:#ffffff;transform:translate(216.75px,914.00px) scaleX(0.9634);-webkit-text-stroke:0.12px #ffffff">Sheriff YC</div>
<div class="t" style="left:0;top:0;font-size:21.7px;color:#ffffff;transform:translate(604.10px,878.20px) scaleX(0.9603);-webkit-text-stroke:0.12px #ffffff">jor26@hotmail.com</div>
<div class="t" style="left:0;top:0;font-size:21.7px;color:#ffffff;transform:translate(949.31px,878.20px) scaleX(0.9684);-webkit-text-stroke:0.12px #ffffff">Anthony Mit</div>
<div class="t" style="left:0;top:0;font-size:21.7px;color:#ffffff;transform:translate(948.46px,914.00px) scaleX(0.9849);-webkit-text-stroke:0.12px #ffffff">89205</div>
<div class="t" style="left:0;top:0;font-size:21.7px;color:#ffffff;transform:translate(1257.82px,896.00px) scaleX(0.8991);-webkit-text-stroke:0.12px #ffffff">CLUB MANAGER</div>
<div class="t" style="left:0;top:0;font-size:21.7px;color:#ffffff;transform:translate(216.81px,968.20px) scaleX(0.9501);-webkit-text-stroke:0.12px #ffffff">Gary Du</div>
<div class="t" style="left:0;top:0;font-size:21.7px;color:#ffffff;transform:translate(296.75px,968.20px) scaleX(0.9692);-webkit-text-stroke:0.12px #ffffff">(gdu)</div>
<div class="t" style="left:0;top:0;font-size:21.7px;color:#ffffff;transform:translate(216.75px,1004.00px) scaleX(0.9634);-webkit-text-stroke:0.12px #ffffff">Sheriff YC</div>
<div class="t" style="left:0;top:0;font-size:21.7px;color:#ffffff;transform:translate(603.84px,968.20px) scaleX(0.9875);-webkit-text-stroke:0.12px #ffffff">gary</div>
<div class="t" style="left:0;top:0;font-size:21.7px;color:#ffffff;transform:translate(648.05px,968.20px) scaleX(0.9511);-webkit-text-stroke:0.12px #ffffff">@gmail.com</div>
<div class="t" style="left:0;top:0;font-size:21.7px;color:#ffffff;transform:translate(948.41px,968.20px) scaleX(0.9432);-webkit-text-stroke:0.12px #ffffff">Gary Du</div>
<div class="t" style="left:0;top:0;font-size:21.7px;color:#ffffff;transform:translate(948.36px,1004.00px) scaleX(1.0084);width:38.52px;overflow:hidden;-webkit-text-stroke:0.12px #ffffff">5073</div>
<div class="t" style="left:0;top:0;font-size:21.7px;color:#ffffff;transform:translate(216.70px,1058.20px) scaleX(0.9391);-webkit-text-stroke:0.12px #ffffff">Daniel Dow</div>
<div class="t" style="left:0;top:0;font-size:21.7px;color:#ffffff;transform:translate(324.76px,1058.20px) scaleX(0.9655);-webkit-text-stroke:0.12px #ffffff">(ddow</div>
<div class="t" style="left:0;top:0;font-size:21.7px;color:#ffffff;transform:translate(387.19px,1058.20px) scaleX(0.6743);-webkit-text-stroke:0.45px #ffffff">)</div>
<div class="t" style="left:0;top:0;font-size:21.7px;color:#ffffff;transform:translate(216.75px,1094.00px) scaleX(0.9634);-webkit-text-stroke:0.12px #ffffff">Sheriff YC</div>
<div class="t" style="left:0;top:0;font-size:21.7px;color:#ffffff;transform:translate(603.89px,1058.20px) scaleX(0.9643);-webkit-text-stroke:0.12px #ffffff">dano.dow</div>
<div class="t" style="left:0;top:0;font-size:21.7px;color:#ffffff;transform:translate(698.17px,1058.20px) scaleX(0.9471);-webkit-text-stroke:0.12px #ffffff">@hotmail.com</div>
<div class="t" style="left:0;top:0;font-size:21.7px;color:#ffffff;transform:translate(947.91px,1058.20px) scaleX(0.9530);-webkit-text-stroke:0.12px #ffffff">Daniel Dow</div>
<div class="t" style="left:0;top:0;font-size:21.7px;color:#ffffff;transform:translate(949.02px,1094.00px) scaleX(0.8850);-webkit-text-stroke:0.12px #ffffff">155</div>
<div class="t" style="left:0;top:0;font-size:21.7px;color:#ffffff;transform:translate(217.52px,1148.20px) scaleX(0.9488);-webkit-text-stroke:0.12px #ffffff">Ana Man</div>
<div class="t" style="left:0;top:0;font-size:21.7px;color:#ffffff;transform:translate(303.32px,1148.20px) scaleX(0.9599);-webkit-text-stroke:0.12px #ffffff">(aman)</div>
<div class="t" style="left:0;top:0;font-size:21.7px;color:#ffffff;transform:translate(216.75px,1184.00px) scaleX(0.9634);-webkit-text-stroke:0.12px #ffffff">Sheriff YC</div>
<div class="t" style="left:0;top:0;font-size:21.7px;color:#ffffff;transform:translate(607.18px,1148.20px) scaleX(0.9561);-webkit-text-stroke:0.12px #ffffff">manoel@yahoo.com</div>
<div class="t" style="left:0;top:0;font-size:21.7px;color:#ffffff;transform:translate(949.33px,1148.20px) scaleX(0.9371);width:90.14px;overflow:hidden;-webkit-text-stroke:0.12px #ffffff">Ana Mano</div>
<div class="t" style="left:0;top:0;font-size:21.7px;color:#ffffff;transform:translate(948.46px,1184.00px) scaleX(0.9808);-webkit-text-stroke:0.12px #ffffff">375</div>
<div class="t" style="left:0;top:0;font-size:21.7px;color:#ffffff;transform:translate(1257.85px,1166.00px) scaleX(0.8937);-webkit-text-stroke:0.12px #ffffff">CLUB PAYMENT ADMINISTRATOR, CLUB REGISTRATION MANAGER</div>
<div class="t" style="left:0;top:0;font-size:21.7px;color:#ffffff;transform:translate(217.15px,1238.20px) scaleX(0.9540);-webkit-text-stroke:0.12px #ffffff">Peter Whel</div>
<div class="t" style="left:0;top:0;font-size:21.7px;color:#ffffff;transform:translate(325.37px,1238.20px) scaleX(0.9761);-webkit-text-stroke:0.12px #ffffff">(whel)</div>
<div class="t" style="left:0;top:0;font-size:21.7px;color:#ffffff;transform:translate(216.75px,1274.00px) scaleX(0.9634);-webkit-text-stroke:0.12px #ffffff">Sheriff YC</div>
<div class="t" style="left:0;top:0;font-size:21.7px;color:#ffffff;transform:translate(608.49px,1238.20px) scaleX(0.9631);-webkit-text-stroke:0.12px #ffffff">lan07@googlemail.com</div>
<div class="t" style="left:0;top:0;font-size:21.7px;color:#ffffff;transform:translate(947.96px,1238.20px) scaleX(0.9685);-webkit-text-stroke:0.12px #ffffff">Peter Whel</div>
<div class="t" style="left:0;top:0;font-size:21.7px;color:#ffffff;transform:translate(948.76px,1274.00px) scaleX(1.0034);width:38.41px;overflow:hidden;-webkit-text-stroke:0.12px #ffffff">3247</div>
<div class="t" style="left:0;top:0;font-size:21.7px;color:#ffffff;transform:translate(1257.90px,1256.00px) scaleX(0.8874);-webkit-text-stroke:0.12px #ffffff">CLUB MANAGER, CLUB REGISTRATION MANAGER</div>
<div class="t" style="left:0;top:0;font-size:21.7px;color:#ffffff;transform:translate(216.82px,1328.20px) scaleX(0.9479);-webkit-text-stroke:0.12px #ffffff">Stephen Dun</div>
<div class="t" style="left:0;top:0;font-size:21.7px;color:#ffffff;transform:translate(340.83px,1328.20px) scaleX(0.9464);-webkit-text-stroke:0.12px #ffffff">(du</div>
<div class="t" style="left:0;top:0;font-size:21.7px;color:#ffffff;transform:translate(374.04px,1328.20px) scaleX(0.9462);-webkit-text-stroke:0.12px #ffffff">stephen)</div>
<div class="t" style="left:0;top:0;font-size:21.7px;color:#ffffff;transform:translate(216.75px,1364.00px) scaleX(0.9634);-webkit-text-stroke:0.12px #ffffff">Sheriff YC</div>
<div class="t" style="left:0;top:0;font-size:21.7px;color:#ffffff;transform:translate(604.09px,1328.20px) scaleX(0.9633);-webkit-text-stroke:0.12px #ffffff">en@sheriffyc.ie</div>
<div class="t" style="left:0;top:0;font-size:21.7px;color:#ffffff;transform:translate(604.20px,1364.00px) scaleX(0.9285);-webkit-text-stroke:0.12px #ffffff">0872101955</div>
<div class="t" style="left:0;top:0;font-size:21.7px;color:#ffffff;transform:translate(948.65px,1328.20px) scaleX(0.9486);-webkit-text-stroke:0.12px #ffffff">Stephen Dun</div>
<div class="t" style="left:0;top:0;font-size:21.7px;color:#ffffff;transform:translate(948.76px,1364.00px) scaleX(1.0034);width:39.30px;overflow:hidden;-webkit-text-stroke:0.12px #ffffff">3244</div>
<div class="t" style="left:0;top:0;font-size:21.7px;color:#ffffff;transform:translate(1257.84px,1346.00px) scaleX(0.8945);-webkit-text-stroke:0.12px #ffffff">CLUB MANAGER, CLUB PAYMENT ADMINISTRATOR, CLUB REGISTRATION MANAGER, LICENSING MANAGER - CLUB</div>
</div>
</body></html>
